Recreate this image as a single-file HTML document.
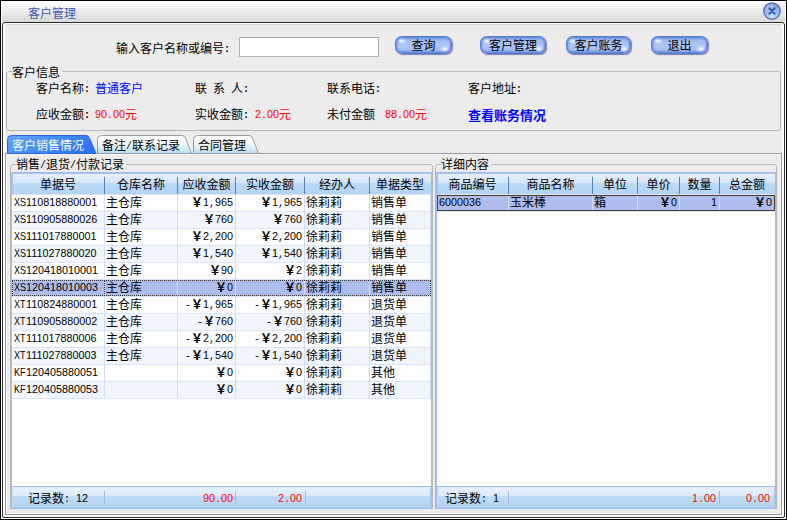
<!DOCTYPE html>
<html lang="zh-CN"><head><meta charset="utf-8"><title>客户管理</title>
<style>
html,body{margin:0;padding:0;background:#fff;}
body{width:787px;height:522px;overflow:hidden;position:relative;font-family:"Liberation Mono","Noto Sans CJK SC",monospace;font-size:12px;color:#000;}
div,button,input{position:absolute;box-sizing:border-box;margin:0;padding:0;}
button,input{font:inherit;color:inherit;outline:0;-webkit-appearance:none;appearance:none;border-radius:0;}
.bt{position:absolute;left:-1px;right:-1px;top:4px;height:12px;line-height:12px;text-align:center;}
.t{height:12px;line-height:12px;white-space:pre;}
.n{font-family:"Liberation Mono",monospace;font-size:10px;display:inline-block;height:12px;line-height:12px;vertical-align:top;transform:translateY(0px) scaleY(1.12);transform-origin:0 9px;white-space:pre;}
.d{font-family:"Liberation Sans",sans-serif;font-size:10.8px;display:inline-block;height:12px;line-height:12px;vertical-align:top;transform:translateY(-2px) scaleY(1.04);transform-origin:0 9px;}
.l{transform:translateY(-2px) scale(0.84,1.04);white-space:nowrap;}
.c{font-weight:bold;}
.red{color:#f00;}
.blue{color:#00f;}
#win{left:0;top:0;width:787px;height:520px;border:1px solid #000;background:#fff;}
#title{left:2px;top:1px;width:783px;height:21px;background:linear-gradient(#ffffff 0%,#fafafa 12%,#ebebeb 50%,#dadada 95%,#dedede 100%);}
#panel{left:2px;top:22px;width:783px;height:496px;border:1px solid #2b2b2b;border-radius:3px 3px 2px 2px;background:#ececec;box-shadow:inset 0 0 0 2px #fff;}
.grp{border:1px solid #b8b8b8;border-radius:3px;}
.leg{background:#ececec;}
.btn{border-radius:6.5px;border:1px solid #557cd0;background:radial-gradient(ellipse 5px 3px at 6px 4px,rgba(255,255,255,.95),rgba(255,255,255,0) 100%),radial-gradient(ellipse 5px 4px at calc(100% - 6px) calc(100% - 4px),rgba(255,255,255,1),rgba(255,255,255,0) 100%),linear-gradient(#86a7ea 0%,#a6bff3 28%,#aec5f5 55%,#a2bbf1 80%,#7497e2 100%);box-shadow:1px 1px 1px #857aae,inset 0 0 2px 1px #5c86da;text-align:center;}
.grid{border:1px solid #a0bbf0;background:#fff;overflow:hidden;}
.hdr{background:linear-gradient(#e6f1fd 0%,#d2e5fa 45%,#badaf6 48%,#b2d3f3 100%);border-top:1px solid #a9c4f2;border-left:1px solid #a9c4f2;}
.ftr{background:linear-gradient(#e6f1fd 0%,#dbeafb 42%,#bddaf6 46%,#b4d5f4 100%);border-top:1px solid #a0bbf0;box-shadow:inset 1px 0 0 #c4dcf8,inset -1px -1px 0 #a9c8f2;}
.hs{width:1px;background:#5b7fae;}
.vs{width:1px;background:#cfe0f8;}
.fs{width:1px;background:#a9b6e6;}
.row{left:0;height:17px;border-bottom:1px solid #d9e6fa;}
.alt{background:#f1f6fd;}
</style></head><body>

<div id="win"></div>
<div id="title"></div>
<div class="t " style="left:28px;top:9px;color:#3a56b2;">客户管理</div>
<div style="left:763px;top:2px;width:18px;height:18px;"><svg width="18" height="18" viewBox="0 0 18 18"><defs><radialGradient id="cg" cx="50%" cy="80%" r="75%"><stop offset="0" stop-color="#c6e4ff"/><stop offset="0.6" stop-color="#8fb6e8"/><stop offset="1" stop-color="#7a9cdc"/></radialGradient></defs><circle cx="9" cy="9" r="8.3" fill="url(#cg)" stroke="#4a5cb0" stroke-width="1.1"/><ellipse cx="6.6" cy="5.2" rx="4" ry="2.2" transform="rotate(-30 6.6 5.2)" fill="#fff" fill-opacity="0.3"/><path d="M6.3 6.3 L11.7 11.7 M11.7 6.3 L6.3 11.7" stroke="#3557b0" stroke-width="2" stroke-linecap="round"/></svg></div>
<div id="panel"></div>
<div class="" style="left:6px;top:24px;width:775px;height:1px;background:#d4d4d4;"></div>
<div class="t " style="left:116px;top:44px;">输入客户名称或编号<span class="n c">:</span></div>
<input type="text" value="" style="left:239px;top:37px;width:140px;height:20px;background:#fff;border:1px solid #b2b2b2;border-top-color:#a2a2a2;">
<button type="button" class="btn" style="left:395px;top:36px;width:57px;height:18px;"><span class="bt">查询</span></button>
<button type="button" class="btn" style="left:480px;top:36px;width:66px;height:18px;"><span class="bt">客户管理</span></button>
<button type="button" class="btn" style="left:566px;top:36px;width:65px;height:18px;"><span class="bt">客户账务</span></button>
<button type="button" class="btn" style="left:651px;top:36px;width:57px;height:18px;"><span class="bt">退出</span></button>
<div class="grp" style="left:6px;top:71px;width:775px;height:60px;"></div>
<div class="leg" style="left:12px;top:66px;width:50px;height:12px;"></div>
<div class="t " style="left:12px;top:68px;">客户信息</div>
<div class="t " style="left:36px;top:84px;">客户名称<span class="n c">:</span></div>
<div class="t blue" style="left:95px;top:84px;">普通客户</div>
<div class="t " style="left:195px;top:84px;">联<span class="n"> </span>系<span class="n"> </span>人<span class="n c">:</span></div>
<div class="t " style="left:327px;top:84px;">联系电话<span class="n c">:</span></div>
<div class="t " style="left:468px;top:84px;">客户地址<span class="n c">:</span></div>
<div class="t " style="left:36px;top:110px;">应收金额<span class="n c">:</span></div>
<div class="t red" style="left:95px;top:110px;"><span class="d">90</span><span class="n">.</span><span class="d">00</span>元</div>
<div class="t " style="left:195px;top:110px;">实收金额<span class="n c">:</span></div>
<div class="t red" style="left:255px;top:110px;"><span class="d">2</span><span class="n">.</span><span class="d">00</span>元</div>
<div class="t " style="left:327px;top:110px;">未付金额</div>
<div class="t red" style="left:385px;top:110px;"><span class="d">88</span><span class="n">.</span><span class="d">00</span>元</div>
<div class="t blue" style="left:468px;top:111px;font-weight:bold;font-size:13px;">查看账务情况</div>
<div class="" style="left:5px;top:153px;width:777px;height:362px;border:1px solid #9a9a9a;background:#ececec;box-shadow:inset 1px 1px 0 #f6f6f6, inset -1px -1px 0 #f6f6f6;"></div>
<div style="left:5px;top:134px;width:262px;height:20px;"><svg width="262" height="20" viewBox="0 0 262 20">
<defs>
<linearGradient id="ta" x1="0" y1="0" x2="1" y2="0.35"><stop offset="0" stop-color="#62a4fb"/><stop offset="0.5" stop-color="#4590f8"/><stop offset="1" stop-color="#2c74f3"/></linearGradient>
<linearGradient id="ti" x1="0" y1="0" x2="0" y2="1"><stop offset="0" stop-color="#ffffff"/><stop offset="0.45" stop-color="#f4fafd"/><stop offset="1" stop-color="#b4dcef"/></linearGradient>
</defs>
<path d="M2.5 19.5 V5.5 Q2.5 1.5 6.5 1.5 H81 Q83.5 1.5 84.5 4 L91 19.5 Z" fill="url(#ta)" stroke="#2f63e0" stroke-width="1"/>
<path d="M92.5 19.5 V5.5 Q92.5 1.5 96.5 1.5 H177 Q179.5 1.5 180.5 4 L186.5 19.5 Z" fill="url(#ti)" stroke="#9a9a9a" stroke-width="1"/>
<path d="M188.5 19.5 V5.5 Q188.5 1.5 192.5 1.5 H244 Q246.5 1.5 247.5 4 L253.5 19.5 Z" fill="url(#ti)" stroke="#9a9a9a" stroke-width="1"/>
</svg></div>
<div class="t " style="left:12px;top:141px;color:#fff;">客户销售情况</div>
<div class="t " style="left:102px;top:141px;">备注<span class="n">/</span>联系记录</div>
<div class="t " style="left:198px;top:141px;">合同管理</div>
<div class="grp" style="left:10px;top:164px;width:423px;height:360px;clip-path:inset(0 0 15px 0);"></div>
<div class="leg" style="left:16px;top:158px;width:110px;height:12px;"></div>
<div class="t " style="left:16px;top:160px;">销售<span class="n">/</span>退货<span class="n">/</span>付款记录</div>
<div class="grid" style="left:11px;top:172px;width:421px;height:337px;"><div class="hdr" style="left:0;top:0;width:419px;height:21px;"></div><div class="t" style="left:0px;top:7px;width:92px;text-align:center;">单据号</div><div class="hs" style="left:92px;top:4px;height:17px;"></div><div class="t" style="left:93px;top:7px;width:72px;text-align:center;">仓库名称</div><div class="hs" style="left:165px;top:4px;height:17px;"></div><div class="t" style="left:166px;top:7px;width:57px;text-align:center;">应收金额</div><div class="hs" style="left:223px;top:4px;height:17px;"></div><div class="t" style="left:224px;top:7px;width:68px;text-align:center;">实收金额</div><div class="hs" style="left:292px;top:4px;height:17px;"></div><div class="t" style="left:293px;top:7px;width:64px;text-align:center;">经办人</div><div class="hs" style="left:357px;top:4px;height:17px;"></div><div class="t" style="left:358px;top:7px;width:60px;text-align:center;">单据类型</div><div style="left:0;top:21px;width:419px;height:1px;background:#d9e6fa;"></div><div class="row" style="top:22px;width:419px;"><div class="t" style="left:2px;top:3px;"><span class="d l" style="width:12px">XS</span><span class="d">110818880001</span></div><div class="t" style="left:94px;top:3px;">主仓库</div><div class="t" style="left:166px;top:3px;width:55px;text-align:right;"><b>￥</b><span class="d">1</span><span class="n">,</span><span class="d">965</span></div><div class="t" style="left:224px;top:3px;width:66px;text-align:right;"><b>￥</b><span class="d">1</span><span class="n">,</span><span class="d">965</span></div><div class="t" style="left:294px;top:3px;">徐莉莉</div><div class="t" style="left:359px;top:3px;">销售单</div></div><div class="row alt" style="top:39px;width:419px;"><div class="t" style="left:2px;top:3px;"><span class="d l" style="width:12px">XS</span><span class="d">110905880026</span></div><div class="t" style="left:94px;top:3px;">主仓库</div><div class="t" style="left:166px;top:3px;width:55px;text-align:right;"><b>￥</b><span class="d">760</span></div><div class="t" style="left:224px;top:3px;width:66px;text-align:right;"><b>￥</b><span class="d">760</span></div><div class="t" style="left:294px;top:3px;">徐莉莉</div><div class="t" style="left:359px;top:3px;">销售单</div></div><div class="row" style="top:56px;width:419px;"><div class="t" style="left:2px;top:3px;"><span class="d l" style="width:12px">XS</span><span class="d">111017880001</span></div><div class="t" style="left:94px;top:3px;">主仓库</div><div class="t" style="left:166px;top:3px;width:55px;text-align:right;"><b>￥</b><span class="d">2</span><span class="n">,</span><span class="d">200</span></div><div class="t" style="left:224px;top:3px;width:66px;text-align:right;"><b>￥</b><span class="d">2</span><span class="n">,</span><span class="d">200</span></div><div class="t" style="left:294px;top:3px;">徐莉莉</div><div class="t" style="left:359px;top:3px;">销售单</div></div><div class="row alt" style="top:73px;width:419px;"><div class="t" style="left:2px;top:3px;"><span class="d l" style="width:12px">XS</span><span class="d">111027880020</span></div><div class="t" style="left:94px;top:3px;">主仓库</div><div class="t" style="left:166px;top:3px;width:55px;text-align:right;"><b>￥</b><span class="d">1</span><span class="n">,</span><span class="d">540</span></div><div class="t" style="left:224px;top:3px;width:66px;text-align:right;"><b>￥</b><span class="d">1</span><span class="n">,</span><span class="d">540</span></div><div class="t" style="left:294px;top:3px;">徐莉莉</div><div class="t" style="left:359px;top:3px;">销售单</div></div><div class="row" style="top:90px;width:419px;"><div class="t" style="left:2px;top:3px;"><span class="d l" style="width:12px">XS</span><span class="d">120418010001</span></div><div class="t" style="left:94px;top:3px;">主仓库</div><div class="t" style="left:166px;top:3px;width:55px;text-align:right;"><b>￥</b><span class="d">90</span></div><div class="t" style="left:224px;top:3px;width:66px;text-align:right;"><b>￥</b><span class="d">2</span></div><div class="t" style="left:294px;top:3px;">徐莉莉</div><div class="t" style="left:359px;top:3px;">销售单</div></div><div class="row alt" style="top:107px;width:419px;background:#adbeee;"><div class="t" style="left:2px;top:3px;"><span class="d l" style="width:12px">XS</span><span class="d">120418010003</span></div><div class="t" style="left:94px;top:3px;">主仓库</div><div class="t" style="left:166px;top:3px;width:55px;text-align:right;"><b>￥</b><span class="d">0</span></div><div class="t" style="left:224px;top:3px;width:66px;text-align:right;"><b>￥</b><span class="d">0</span></div><div class="t" style="left:294px;top:3px;">徐莉莉</div><div class="t" style="left:359px;top:3px;">销售单</div></div><div class="row" style="top:124px;width:419px;"><div class="t" style="left:2px;top:3px;"><span class="d l" style="width:12px">XT</span><span class="d">110824880001</span></div><div class="t" style="left:94px;top:3px;">主仓库</div><div class="t" style="left:166px;top:3px;width:55px;text-align:right;"><span class="n">-</span><b>￥</b><span class="d">1</span><span class="n">,</span><span class="d">965</span></div><div class="t" style="left:224px;top:3px;width:66px;text-align:right;"><span class="n">-</span><b>￥</b><span class="d">1</span><span class="n">,</span><span class="d">965</span></div><div class="t" style="left:294px;top:3px;">徐莉莉</div><div class="t" style="left:359px;top:3px;">退货单</div></div><div class="row alt" style="top:141px;width:419px;"><div class="t" style="left:2px;top:3px;"><span class="d l" style="width:12px">XT</span><span class="d">110905880002</span></div><div class="t" style="left:94px;top:3px;">主仓库</div><div class="t" style="left:166px;top:3px;width:55px;text-align:right;"><span class="n">-</span><b>￥</b><span class="d">760</span></div><div class="t" style="left:224px;top:3px;width:66px;text-align:right;"><span class="n">-</span><b>￥</b><span class="d">760</span></div><div class="t" style="left:294px;top:3px;">徐莉莉</div><div class="t" style="left:359px;top:3px;">退货单</div></div><div class="row" style="top:158px;width:419px;"><div class="t" style="left:2px;top:3px;"><span class="d l" style="width:12px">XT</span><span class="d">111017880006</span></div><div class="t" style="left:94px;top:3px;">主仓库</div><div class="t" style="left:166px;top:3px;width:55px;text-align:right;"><span class="n">-</span><b>￥</b><span class="d">2</span><span class="n">,</span><span class="d">200</span></div><div class="t" style="left:224px;top:3px;width:66px;text-align:right;"><span class="n">-</span><b>￥</b><span class="d">2</span><span class="n">,</span><span class="d">200</span></div><div class="t" style="left:294px;top:3px;">徐莉莉</div><div class="t" style="left:359px;top:3px;">退货单</div></div><div class="row alt" style="top:175px;width:419px;"><div class="t" style="left:2px;top:3px;"><span class="d l" style="width:12px">XT</span><span class="d">111027880003</span></div><div class="t" style="left:94px;top:3px;">主仓库</div><div class="t" style="left:166px;top:3px;width:55px;text-align:right;"><span class="n">-</span><b>￥</b><span class="d">1</span><span class="n">,</span><span class="d">540</span></div><div class="t" style="left:224px;top:3px;width:66px;text-align:right;"><span class="n">-</span><b>￥</b><span class="d">1</span><span class="n">,</span><span class="d">540</span></div><div class="t" style="left:294px;top:3px;">徐莉莉</div><div class="t" style="left:359px;top:3px;">退货单</div></div><div class="row" style="top:192px;width:419px;"><div class="t" style="left:2px;top:3px;"><span class="d l" style="width:12px">KF</span><span class="d">120405880051</span></div><div class="t" style="left:94px;top:3px;"></div><div class="t" style="left:166px;top:3px;width:55px;text-align:right;"><b>￥</b><span class="d">0</span></div><div class="t" style="left:224px;top:3px;width:66px;text-align:right;"><b>￥</b><span class="d">0</span></div><div class="t" style="left:294px;top:3px;">徐莉莉</div><div class="t" style="left:359px;top:3px;">其他</div></div><div class="row alt" style="top:209px;width:419px;"><div class="t" style="left:2px;top:3px;"><span class="d l" style="width:12px">KF</span><span class="d">120405880053</span></div><div class="t" style="left:94px;top:3px;"></div><div class="t" style="left:166px;top:3px;width:55px;text-align:right;"><b>￥</b><span class="d">0</span></div><div class="t" style="left:224px;top:3px;width:66px;text-align:right;"><b>￥</b><span class="d">0</span></div><div class="t" style="left:294px;top:3px;">徐莉莉</div><div class="t" style="left:359px;top:3px;">其他</div></div><div class="vs" style="left:92px;top:21px;height:205px;"></div><div class="vs" style="left:165px;top:21px;height:205px;"></div><div class="vs" style="left:223px;top:21px;height:205px;"></div><div class="vs" style="left:292px;top:21px;height:205px;"></div><div class="vs" style="left:357px;top:21px;height:205px;"></div><div class="vs" style="left:418px;top:21px;height:205px;"></div><div style="left:0;top:107px;width:419px;height:16px;border:1px dotted #333;"></div><div style="left:0;top:107px;width:93px;height:16px;border:1px dotted #333;"></div><div class="ftr" style="left:0;top:313px;width:419px;height:22px;"><div class="fs" style="left:92px;top:4px;height:13px;"></div><div class="fs" style="left:223px;top:4px;height:13px;"></div><div class="fs" style="left:293px;top:4px;height:13px;"></div><div class="t " style="left:16px;top:7px;">记录数<span class="n">: </span><span class="d">12</span></div><div class="t red" style="left:166px;top:7px;width:55px;text-align:right;"><span class="d">90</span><span class="n">.</span><span class="d">00</span></div><div class="t red" style="left:225px;top:7px;width:65px;text-align:right;"><span class="d">2</span><span class="n">.</span><span class="d">00</span></div></div></div>
<div class="grp" style="left:435px;top:164px;width:342px;height:360px;clip-path:inset(0 0 15px 0);"></div>
<div class="leg" style="left:441px;top:158px;width:50px;height:12px;"></div>
<div class="t " style="left:441px;top:160px;">详细内容</div>
<div class="grid" style="left:436px;top:172px;width:340px;height:337px;"><div class="hdr" style="left:0;top:0;width:338px;height:21px;"></div><div class="t" style="left:0px;top:7px;width:71px;text-align:center;">商品编号</div><div class="hs" style="left:71px;top:4px;height:17px;"></div><div class="t" style="left:72px;top:7px;width:83px;text-align:center;">商品名称</div><div class="hs" style="left:155px;top:4px;height:17px;"></div><div class="t" style="left:156px;top:7px;width:44px;text-align:center;">单位</div><div class="hs" style="left:200px;top:4px;height:17px;"></div><div class="t" style="left:201px;top:7px;width:41px;text-align:center;">单价</div><div class="hs" style="left:242px;top:4px;height:17px;"></div><div class="t" style="left:243px;top:7px;width:39px;text-align:center;">数量</div><div class="hs" style="left:282px;top:4px;height:17px;"></div><div class="t" style="left:283px;top:7px;width:54px;text-align:center;">总金额</div><div style="left:0;top:21px;width:338px;height:1px;background:#d9e6fa;"></div><div class="row" style="top:22px;width:338px;background:#adbeee;"><div class="t" style="left:2px;top:3px;"><span class="d">6000036</span></div><div class="t" style="left:73px;top:3px;">玉米棒</div><div class="t" style="left:157px;top:3px;">箱</div><div class="t" style="left:201px;top:3px;width:39px;text-align:right;"><b>￥</b><span class="d">0</span></div><div class="t" style="left:243px;top:3px;width:37px;text-align:right;"><span class="d">1</span></div><div class="t" style="left:283px;top:3px;width:52px;text-align:right;"><b>￥</b><span class="d">0</span></div></div><div class="vs" style="left:71px;top:21px;height:18px;"></div><div class="vs" style="left:155px;top:21px;height:18px;"></div><div class="vs" style="left:200px;top:21px;height:18px;"></div><div class="vs" style="left:242px;top:21px;height:18px;"></div><div class="vs" style="left:282px;top:21px;height:18px;"></div><div class="vs" style="left:337px;top:21px;height:18px;"></div><div style="left:0;top:22px;width:338px;height:16px;border:1px solid #4a3c28;"></div><div class="ftr" style="left:0;top:313px;width:338px;height:22px;"><div class="fs" style="left:71px;top:4px;height:13px;"></div><div class="fs" style="left:282px;top:4px;height:13px;"></div><div class="t " style="left:8px;top:7px;">记录数<span class="n">: </span><span class="d">1</span></div><div class="t red" style="left:203px;top:7px;width:76px;text-align:right;"><span class="d">1</span><span class="n">.</span><span class="d">00</span></div><div class="t red" style="left:284px;top:7px;width:49px;text-align:right;"><span class="d">0</span><span class="n">.</span><span class="d">00</span></div></div></div>
</body></html>
